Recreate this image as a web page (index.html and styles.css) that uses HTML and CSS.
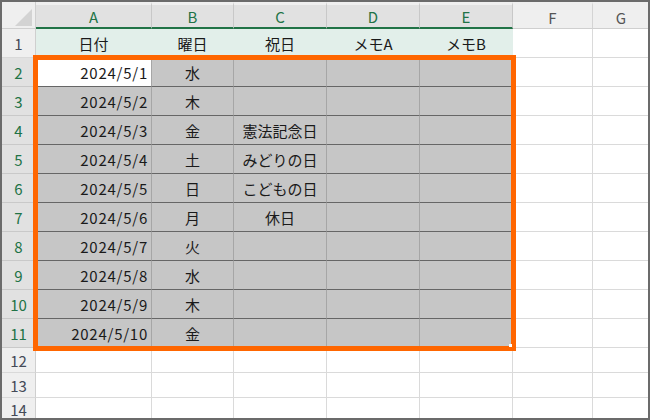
FILE: index.html
```html
<!DOCTYPE html>
<html lang="ja">
<head>
<meta charset="utf-8">
<link rel="stylesheet" href="styles.css">
</head>
<body>
<div class="window">
  <div class="sheet">
    <div class="corner"><svg class="tri" width="18" height="18" viewBox="0 0 18 18"><polygon points="17,0 17,17 0,17" fill="#d3d3d3"/></svg></div>
    <div class="ch sel">A</div><div class="ch sel">B</div><div class="ch sel">C</div><div class="ch sel">D</div><div class="ch sel">E</div><div class="ch">F</div><div class="ch last">G</div>

    <div class="rh">1</div>
    <div class="c hd">日付</div><div class="c hd">曜日</div><div class="c hd">祝日</div><div class="c hd">メモA</div><div class="c hd">メモB</div><div class="c">&nbsp;</div><div class="c last">&nbsp;</div>

    <div class="rh rsel">2</div>
    <div class="c g date active">2024/5/1</div><div class="c g">水</div><div class="c g"></div><div class="c g"></div><div class="c g"></div><div class="c"></div><div class="c last"></div>

    <div class="rh rsel">3</div>
    <div class="c g date">2024/5/2</div><div class="c g">木</div><div class="c g"></div><div class="c g"></div><div class="c g"></div><div class="c"></div><div class="c last"></div>

    <div class="rh rsel">4</div>
    <div class="c g date">2024/5/3</div><div class="c g">金</div><div class="c g">憲法記念日</div><div class="c g"></div><div class="c g"></div><div class="c"></div><div class="c last"></div>

    <div class="rh rsel">5</div>
    <div class="c g date">2024/5/4</div><div class="c g">土</div><div class="c g">みどりの日</div><div class="c g"></div><div class="c g"></div><div class="c"></div><div class="c last"></div>

    <div class="rh rsel">6</div>
    <div class="c g date">2024/5/5</div><div class="c g">日</div><div class="c g">こどもの日</div><div class="c g"></div><div class="c g"></div><div class="c"></div><div class="c last"></div>

    <div class="rh rsel">7</div>
    <div class="c g date">2024/5/6</div><div class="c g">月</div><div class="c g">休日</div><div class="c g"></div><div class="c g"></div><div class="c"></div><div class="c last"></div>

    <div class="rh rsel">8</div>
    <div class="c g date">2024/5/7</div><div class="c g">火</div><div class="c g"></div><div class="c g"></div><div class="c g"></div><div class="c"></div><div class="c last"></div>

    <div class="rh rsel">9</div>
    <div class="c g date">2024/5/8</div><div class="c g">水</div><div class="c g"></div><div class="c g"></div><div class="c g"></div><div class="c"></div><div class="c last"></div>

    <div class="rh rsel">10</div>
    <div class="c g date">2024/5/9</div><div class="c g">木</div><div class="c g"></div><div class="c g"></div><div class="c g"></div><div class="c"></div><div class="c last"></div>

    <div class="rh rsel">11</div>
    <div class="c g date">2024/5/10</div><div class="c g">金</div><div class="c g"></div><div class="c g"></div><div class="c g"></div><div class="c"></div><div class="c last"></div>

    <div class="rh">12</div>
    <div class="c"></div><div class="c"></div><div class="c"></div><div class="c"></div><div class="c"></div><div class="c"></div><div class="c last"></div>

    <div class="rh">13</div>
    <div class="c"></div><div class="c"></div><div class="c"></div><div class="c"></div><div class="c"></div><div class="c"></div><div class="c last"></div>

    <div class="rh">14</div>
    <div class="c"></div><div class="c"></div><div class="c"></div><div class="c"></div><div class="c"></div><div class="c"></div><div class="c last"></div>
  </div>
  <div class="selection"><span class="handle"></span></div>
</div>
</body>
</html>
```

FILE: styles.css
```css
* { box-sizing: border-box; }
html, body { margin: 0; padding: 0; background: #ffffff; }
body {
  font-family: "Noto Sans CJK JP", "Noto Sans", sans-serif;
  font-size: 15px;
  color: #1a1a1a;
}
.window {
  position: relative;
  width: 650px;
  height: 420px;
  border: 2px solid #6b6b6b;
  overflow: hidden;
  background: #ffffff;
}
.sheet {
  display: grid;
  grid-template-columns: 34px 116px 82px 93px 93px 93px 80px 1fr;
  grid-template-rows: 27px repeat(11, 29px) 25px 25px 1fr;
  height: 100%;
}
.corner {
  position: relative;
  background: #efefef;
  border-right: 1px solid #cfcfcf;
  border-bottom: 1px solid #cfcfcf;
  display: flex;
  align-items: flex-end;
  justify-content: flex-end;
  padding: 0 2px 1px 0;
}
.tri { display: block; }
.ch {
  background: #efefef;
  border-top: 3px solid #efefef;
  border-right: 1px solid #d4d4d4;
  border-bottom: 1px solid #cfcfcf;
  color: #555555;
  display: flex;
  align-items: center;
  justify-content: center;
  font-size: 15px;
  padding-top: 1px;
}
.ch.sel {
  background: #e1e1e1;
  color: #217346;
  border-bottom: 2px solid #217346;
  border-right-color: #c8c8c8;
}
.ch.last { border-right: none; justify-content: flex-end; padding-right: 22px; }
.rh {
  background: #efefef;
  border-right: 1px solid #cfcfcf;
  border-bottom: 1px solid #d9d9d9;
  color: #444a57;
  display: flex;
  align-items: center;
  justify-content: center;
  font-size: 15px;
  padding-top: 1px;
}
.rh.rsel {
  background: #e1e1e1;
  color: #217346;
  border-bottom-color: #c9c9c9;
}
.c {
  border-right: 1px solid #dadada;
  border-bottom: 1px solid #dadada;
  display: flex;
  align-items: center;
  justify-content: center;
  white-space: nowrap;
  overflow: hidden;
}
.c.last { border-right: none; }
.c.hd {
  background: #e2efea;
  border-right-color: #e2efea;
  border-bottom-color: #e2efea;
}
.c.g {
  background: #c6c6c6;
  border-right-color: #a6a6a6;
  border-bottom-color: #666666;
}
.c.date {
  justify-content: flex-end;
  padding-right: 3px;
  letter-spacing: 0.75px;
}
.c.active { background: #ffffff; }
.selection {
  position: absolute;
  left: 31px;
  top: 53px;
  width: 483px;
  height: 296px;
  border: 5px solid #ff6600;
  pointer-events: none;
}
.handle {
  position: absolute;
  right: -1px;
  bottom: -1px;
  width: 3px;
  height: 3px;
  background: #ffffff;
}
```
